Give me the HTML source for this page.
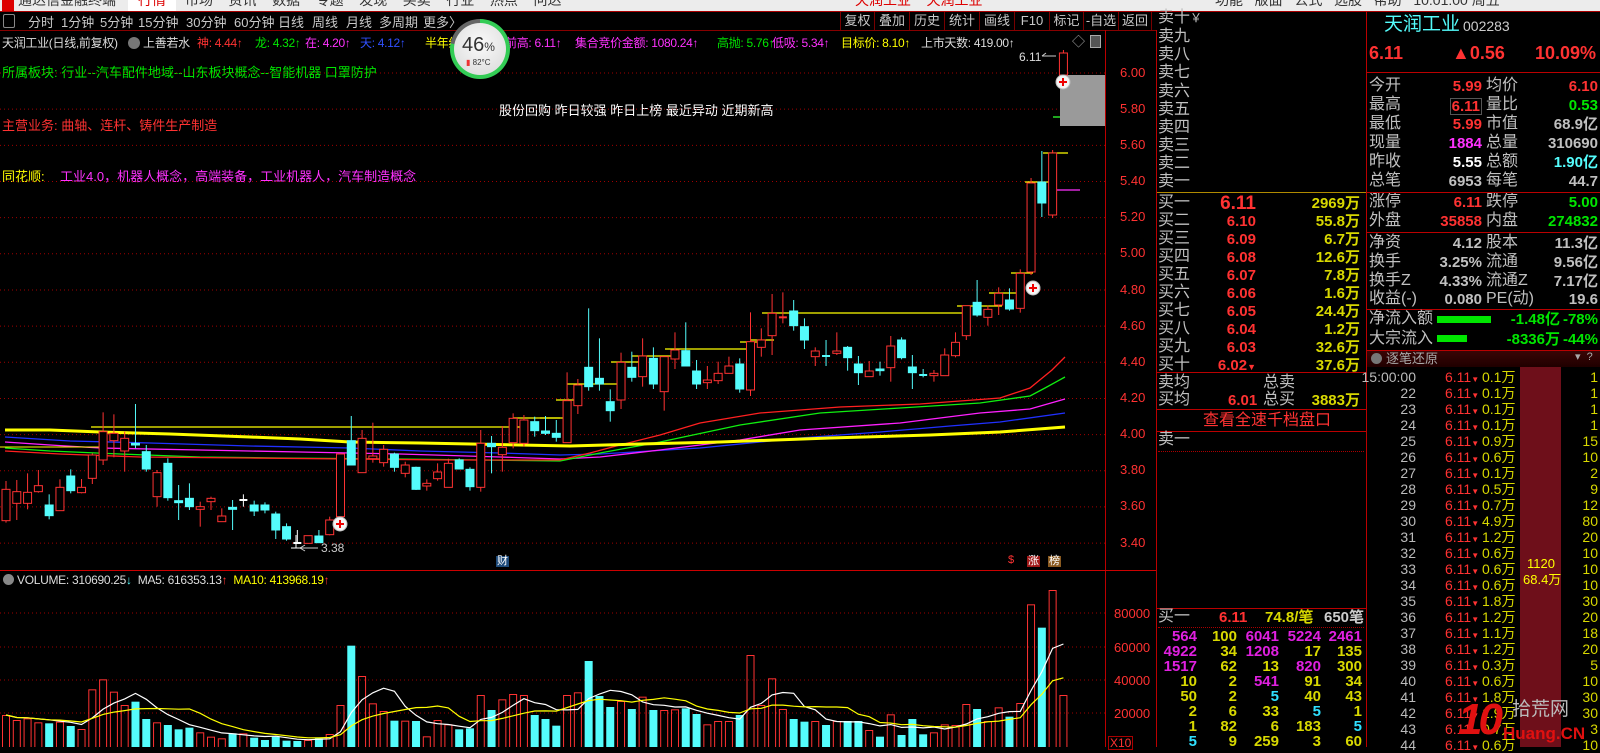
<!DOCTYPE html>
<html><head><meta charset="utf-8"><style>
*{margin:0;padding:0;box-sizing:border-box}
body{width:1600px;height:747px;background:#000;overflow:hidden;position:relative;font-family:"Liberation Sans","Noto Sans CJK SC",sans-serif;color:#c8c8c8}
.t{position:absolute;white-space:nowrap;line-height:1}
.r{color:#ff3232}.g{color:#00e600}.m{color:#ff32ff}.y{color:#ffff00}.c{color:#54fcfc}.w{color:#fff}.gy{color:#c0c0c0}.o{color:#d8d800}
.ob{font-size:16px;color:#c0c0c0}
.n{font-size:15px;font-weight:bold}
.tb{font-size:13px;color:#c8c8c8;top:16px}
.hd{font-size:12px;top:37px;letter-spacing:-0.3px}
.btn{position:absolute;top:12px;height:18px;border-left:1px solid #700;font-size:13px;color:#c8c8c8;text-align:center;line-height:18px}
.tl{font-size:14px}
</style></head><body>
<!-- title bar -->
<div style="position:absolute;left:0;top:0;width:1600px;height:11px;background:#ececec;overflow:hidden">
<div style="position:absolute;left:2px;top:0;width:12px;height:11px;background:#d00"></div>
<div class="t" style="left:18px;top:-7px;font-size:14px;color:#333">通达信金融终端</div>
<div style="position:absolute;left:128px;top:0;width:48px;height:11px;background:#fff"></div>
<div class="t" style="left:138px;top:-7px;font-size:14px;color:#d00">行情</div>
<div class="t" style="left:185px;top:-7px;font-size:14px;color:#333">市场&nbsp;&nbsp;&nbsp;&nbsp;资讯&nbsp;&nbsp;&nbsp;&nbsp;数据&nbsp;&nbsp;&nbsp;&nbsp;专题&nbsp;&nbsp;&nbsp;&nbsp;发现&nbsp;&nbsp;&nbsp;&nbsp;买卖&nbsp;&nbsp;&nbsp;&nbsp;行业&nbsp;&nbsp;&nbsp;&nbsp;热点&nbsp;&nbsp;&nbsp;&nbsp;问达</div>
<div class="t" style="left:855px;top:-7px;font-size:14px;color:#d00">天润工业&nbsp;&nbsp;&nbsp;&nbsp;天润工业</div>
<div class="t" style="left:1215px;top:-7px;font-size:14px;color:#333">功能&nbsp;&nbsp;&nbsp;版面&nbsp;&nbsp;&nbsp;公式&nbsp;&nbsp;&nbsp;选股&nbsp;&nbsp;&nbsp;帮助&nbsp;&nbsp;&nbsp;10:01:00 周五</div>
</div>
<div style="position:absolute;left:0;top:11px;width:1600px;height:1px;background:#a00"></div>
<div style="position:absolute;left:0;top:30px;width:1156px;height:1px;background:#800"></div>
<div style="position:absolute;left:3px;top:14px;width:12px;height:14px;border:1px solid #888;border-radius:2px"></div>
<div class="t tb" style="left:28px">分时</div>
<div class="t tb" style="left:61px">1分钟</div>
<div class="t tb" style="left:100px">5分钟</div>
<div class="t tb" style="left:138px">15分钟</div>
<div class="t tb" style="left:186px">30分钟</div>
<div class="t tb" style="left:234px">60分钟</div>
<div class="t tb c" style="left:278px">日线</div>
<div class="t tb" style="left:312px">周线</div>
<div class="t tb" style="left:346px">月线</div>
<div class="t tb" style="left:379px">多周期</div>
<div class="t tb" style="left:423px">更多〉</div>
<div class="btn" style="left:840px;width:34px">复权</div>
<div class="btn" style="left:874px;width:35px">叠加</div>
<div class="btn" style="left:909px;width:35px">历史</div>
<div class="btn" style="left:944px;width:35px">统计</div>
<div class="btn" style="left:979px;width:35px">画线</div>
<div class="btn" style="left:1014px;width:35px">F10</div>
<div class="btn" style="left:1049px;width:34px">标记</div>
<div class="btn" style="left:1083px;width:35px">-自选</div>
<div class="btn" style="left:1118px;width:34px;border-right:1px solid #700">返回</div>

<!-- header line -->
<div class="t hd" style="left:2px;color:#ddd">天润工业(日线,前复权)</div>
<div style="position:absolute;left:128px;top:37px;width:12px;height:12px;border-radius:6px;background:#777"></div>
<div class="t hd" style="left:143px;color:#ddd">上善若水</div>
<div class="t hd r" style="left:197px">神: 4.44↑</div>
<div class="t hd g" style="left:255px">龙: 4.32↑</div>
<div class="t hd m" style="left:305px">在: 4.20↑</div>
<div class="t hd" style="left:360px;color:#3050ff">天: 4.12↑</div>
<div class="t hd y" style="left:425px">半年线</div>
<div class="t hd m" style="left:505px">前高: 6.11↑</div>
<div class="t hd m" style="left:575px">集合竞价金额: 1080.24↑</div>
<div class="t hd g" style="left:717px">高抛: 5.76↑</div>
<div class="t hd m" style="left:772px">低吸: 5.34↑</div>
<div class="t hd y" style="left:841px">目标价: 8.10↑</div>
<div class="t hd" style="left:921px;color:#ddd">上市天数: 419.00↑</div>
<div class="t" style="left:1072px;top:35px;font-size:13px;color:#aaa">◇</div>
<div style="position:absolute;left:1090px;top:35px;width:11px;height:13px;border:1px solid #aaa;background:#555"></div>

<div class="t g" style="left:2px;top:66px;font-size:13px">所属板块: 行业--汽车配件地域--山东板块概念--智能机器 口罩防护</div>
<div class="t w" style="left:499px;top:104px;font-size:13px">股份回购 昨日较强 昨日上榜 最近异动 近期新高</div>
<div class="t r" style="left:2px;top:119px;font-size:13px">主营业务: 曲轴、连杆、铸件生产制造</div>
<div class="t y" style="left:2px;top:170px;font-size:13px">同花顺:</div>
<div class="t m" style="left:60px;top:170px;font-size:13px">工业4.0，机器人概念，高端装备，工业机器人，汽车制造概念</div>

<svg id="ch" width="1156" height="747" style="position:absolute;left:0;top:0"></svg>

<!-- circle widget -->
<div style="position:absolute;left:450px;top:19px;width:60px;height:60px;border-radius:30px;background:conic-gradient(#33cc55 0 78%,#666 78% 100%);"></div>
<div style="position:absolute;left:454px;top:23px;width:52px;height:52px;border-radius:26px;background:radial-gradient(circle at 50% 40%,#fafafa,#d8d8d8)"></div>
<div class="t" style="left:462px;top:35px;font-size:20px;color:#333">46<span style="font-size:12px">%</span></div>
<div class="t" style="left:466px;top:59px;font-size:8px;color:#333"><span style="color:#e33">▮</span> 82°C</div>

<!-- price axis labels -->
<div class="t r" style="left:1120px;top:66px;font-size:13px">6.00</div>
<div class="t r" style="left:1120px;top:102px;font-size:13px">5.80</div>
<div class="t r" style="left:1120px;top:138px;font-size:13px">5.60</div>
<div class="t r" style="left:1120px;top:174px;font-size:13px">5.40</div>
<div class="t r" style="left:1120px;top:210px;font-size:13px">5.20</div>
<div class="t r" style="left:1120px;top:246px;font-size:13px">5.00</div>
<div class="t r" style="left:1120px;top:283px;font-size:13px">4.80</div>
<div class="t r" style="left:1120px;top:319px;font-size:13px">4.60</div>
<div class="t r" style="left:1120px;top:355px;font-size:13px">4.40</div>
<div class="t r" style="left:1120px;top:391px;font-size:13px">4.20</div>
<div class="t r" style="left:1120px;top:427px;font-size:13px">4.00</div>
<div class="t r" style="left:1120px;top:463px;font-size:13px">3.80</div>
<div class="t r" style="left:1120px;top:499px;font-size:13px">3.60</div>
<div class="t r" style="left:1120px;top:536px;font-size:13px">3.40</div>
<div class="t r" style="left:1114px;top:607px;font-size:13px">80000</div>
<div class="t r" style="left:1114px;top:641px;font-size:13px">60000</div>
<div class="t r" style="left:1114px;top:674px;font-size:13px">40000</div>
<div class="t r" style="left:1114px;top:707px;font-size:13px">20000</div>
<div class="t r" style="left:1108px;top:736px;font-size:12px;border:1px solid #a00;padding:0 1px">X10</div>

<div class="t" style="left:1019px;top:51px;font-size:12px;color:#ddd">6.11</div>
<div class="t" style="left:321px;top:542px;font-size:12px;color:#ccc">3.38</div>
<div class="t" style="left:496px;top:556px;font-size:11px;color:#fff;background:#1d4a7a;padding:0 1px">财</div>
<div class="t" style="left:1008px;top:555px;font-size:11px;color:#f33">$</div>
<div class="t" style="left:1027px;top:556px;font-size:11px;color:#fff;background:#a01818;padding:0 1px">涨</div>
<div class="t" style="left:1048px;top:556px;font-size:11px;color:#fff;background:#8a5a20;padding:0 1px">榜</div>

<!-- volume header -->
<div style="position:absolute;left:3px;top:574px;width:11px;height:11px;border-radius:6px;background:#888"></div>
<div class="t" style="left:17px;top:574px;font-size:12px;color:#ddd;letter-spacing:-0.3px">VOLUME: 310690.25<span class="c">↓</span>&nbsp; MA5: 616353.13<span class="r">↑</span>&nbsp; <span class="y">MA10: 413968.19</span><span class="r">↑</span></div>

<!-- orderbook -->
<div class="t ob" style="left:1158px;top:10px">卖十<span style="font-size:12px">￥</span></div>
<div class="t ob" style="left:1158px;top:29px">卖九</div>
<div class="t ob" style="left:1158px;top:47px">卖八</div>
<div class="t ob" style="left:1158px;top:65px">卖七</div>
<div class="t ob" style="left:1158px;top:84px">卖六</div>
<div class="t ob" style="left:1158px;top:102px">卖五</div>
<div class="t ob" style="left:1158px;top:120px">卖四</div>
<div class="t ob" style="left:1158px;top:138px">卖三</div>
<div class="t ob" style="left:1158px;top:156px">卖二</div>
<div class="t ob" style="left:1158px;top:174px">卖一</div>
<div style="position:absolute;left:1156px;top:192px;width:210px;height:1px;background:#b08a00"></div>
<div id="bids"></div>
<div style="position:absolute;left:1156px;top:372px;width:210px;height:1px;background:#b00"></div>
<div class="t ob" style="left:1158px;top:375px">卖均</div>
<div class="t ob" style="left:1263px;top:375px">总卖</div>
<div class="t ob" style="left:1158px;top:392px">买均</div>
<div class="t n r" style="left:1228px;top:393px">6.01</div>
<div class="t ob" style="left:1263px;top:392px">总买</div>
<div class="t n o" style="right:240px;top:393px">3883万</div>
<div style="position:absolute;left:1156px;top:409px;width:210px;height:1px;background:#b00"></div>
<div class="t r" style="left:1203px;top:413px;font-size:16px">查看全速千档盘口</div>
<div style="position:absolute;left:1156px;top:431px;width:210px;height:1px;background:#b00"></div>
<div class="t ob" style="left:1158px;top:432px">卖一</div>
<div style="position:absolute;left:1158px;top:451px;width:206px;border-top:1px dotted #a00"></div>
<div style="position:absolute;left:1156px;top:608px;width:210px;height:1px;background:#b00"></div>
<div class="t ob" style="left:1158px;top:609px">买一</div>
<div class="t n r" style="left:1219px;top:610px">6.11</div>
<div class="t n o" style="left:1265px;top:610px">74.8/笔</div>
<div class="t n" style="left:1324px;top:610px;color:#ccc">650笔</div>
<div style="position:absolute;left:1158px;top:627px;width:206px;border-top:1px dotted #a00"></div>
<div id="grid"></div>
<div style="position:absolute;left:1156px;top:30px;width:1px;height:717px;background:#b00"></div>
<div style="position:absolute;left:1366px;top:11px;width:1px;height:736px;background:#b00"></div>

<!-- info panel -->
<div class="t c" style="left:1384px;top:15px;font-size:19px">天润工业</div>
<div class="t" style="left:1463px;top:19px;font-size:14px;color:#ccc">002283</div>
<div class="t r" style="left:1369px;top:44px;font-size:18px;font-weight:bold">6.11</div>
<div class="t r" style="left:1452px;top:44px;font-size:18px;font-weight:bold">▲0.56</div>
<div class="t r" style="right:4px;top:44px;font-size:18px;font-weight:bold">10.09%</div>
<div style="position:absolute;left:1366px;top:72px;width:234px;height:1px;background:#b00"></div>
<div id="info"></div>
<div style="position:absolute;left:1366px;top:192px;width:234px;height:1px;background:#b00"></div>
<div style="position:absolute;left:1366px;top:232px;width:234px;height:1px;background:#b00"></div>
<div style="position:absolute;left:1366px;top:309px;width:234px;height:1px;background:#b00"></div>
<div class="t ob" style="left:1369px;top:311px">净流入额</div>
<div style="position:absolute;left:1437px;top:316px;width:54px;height:7px;background:#00e600"></div>
<div class="t n g" style="right:40px;top:312px">-1.48亿</div>
<div class="t n g" style="right:2px;top:312px">-78%</div>
<div class="t ob" style="left:1369px;top:331px">大宗流入</div>
<div style="position:absolute;left:1437px;top:335px;width:30px;height:7px;background:#00e600"></div>
<div class="t n g" style="right:40px;top:332px">-8336万</div>
<div class="t n g" style="right:2px;top:332px">-44%</div>
<div style="position:absolute;left:1366px;top:350px;width:234px;height:1px;background:#b00"></div>
<div style="position:absolute;left:1367px;top:351px;width:233px;height:16px;background:linear-gradient(#3a0505,#200000)"></div>
<div style="position:absolute;left:1371px;top:353px;width:11px;height:11px;border-radius:6px;background:#777"></div>
<div class="t" style="left:1386px;top:352px;font-size:13px;color:#aaa">逐笔还原</div>
<div class="t" style="left:1575px;top:352px;font-size:11px;color:#aaa">▾&nbsp; ?</div>
<div style="position:absolute;left:1520px;top:367px;width:41px;height:380px;background:#6e0f1a"></div>
<div class="t y" style="left:1527px;top:557px;font-size:13px">1120</div>
<div class="t y" style="left:1523px;top:573px;font-size:13px">68.4万</div>
<div id="trades"></div>

<!-- watermark -->
<div class="t" style="left:1458px;top:698px;font-size:44px;font-weight:bold;font-style:italic;color:#e01010;letter-spacing:-4px">10</div>
<div class="t" style="left:1512px;top:700px;font-size:19px;color:#bbb">拾荒网</div>
<div class="t" style="left:1503px;top:725px;font-size:17px;color:#e01010;font-weight:bold">Huang.CN</div>

<script>
const NS="http://www.w3.org/2000/svg",svg=document.getElementById('ch');
function el(n,a){const e=document.createElementNS(NS,n);for(const k in a)e.setAttribute(k,a[k]);svg.appendChild(e);return e}
for(let k=0;k<14;k++){const y=73+k*36.16;el('line',{x1:0,x2:1105,y1:y,y2:y,stroke:'#a00000','stroke-dasharray':'1 3'})}
[613,647,680,713].forEach(y=>el('line',{x1:0,x2:1105,y1:y,y2:y,stroke:'#a00000','stroke-dasharray':'1 3'}));
el('line',{x1:1105.5,x2:1105.5,y1:30,y2:747,stroke:'#b00'});
el('line',{x1:0,x2:1156,y1:570.5,y2:570.5,stroke:'#c00'});
const P=(pts,c,w)=>el('polyline',{points:pts,fill:'none',stroke:c,'stroke-width':w});
P('5,437 70,441 150,443 250,446 350,448 420,451 500,453 560,455 600,454 700,448 800,438 880,432 950,426 1000,422 1065,413','#2030ff',1.3);
P('5,442 50,445 100,448 200,450 300,452 400,454 500,457 560,459 600,457 660,450 740,440 800,430 900,423 980,413 1030,409 1065,399','#ff20ff',1.3);
P('5,448 50,451 120,454 200,457 280,458 400,459 560,461 600,453 660,442 740,425 820,413 900,408 980,403 1030,396 1045,388 1065,377','#10ee10',1.3);
P('5,451 60,454 140,457 250,458 350,459 450,460 560,460 590,453 620,445 660,435 700,423 760,413 840,407 920,404 1000,398 1030,388 1052,370 1065,357','#ff2020',1.3);
P('5,430 50,430 100,432 170,434 250,437 300,439 350,442 420,443 520,445 570,446 640,444 720,442 830,438 930,435 1000,432 1065,427','#ffff00',3);
P('0,447 100,447','#ffff00',1);
[[91,524,427],[513,560,418],[540,569,418],[556,579,400],[567,623,384],[611,644,362],[632,677,356],[665,753,349],[740,763,342],[751,774,340],[762,969,313],[957,1002,306],[989,1023,293],[1011,1033,273],[1025,1052,182],[1043,1068,153]].forEach(a=>el('line',{x1:a[0],x2:a[1],y1:a[2],y2:a[2],stroke:'#ffff00','stroke-width':1.3}));
el('line',{x1:1053,x2:1068,y1:117,y2:117,stroke:'#30ff30','stroke-width':1.3});
el('line',{x1:1056,x2:1080,y1:190,y2:190,stroke:'#ff30ff','stroke-width':1.3});
el('rect',{x:1060,y:75,width:45,height:51,fill:'#9a9a9a'});
const A=[
'r 328 422 303 428','r 335 370 300 420','r 337 370 280 388','r 317 335 270 338','c 375 407 343 418','r 322 392 298 392','c 288 332 268 340','r 322 338 297 340','r 225 295 220 312','r 155 240 97 255',
'r 160 182 103 232','r 175 213 155 275','c 190 195 72 205','c 215 267 195 275','r 278 350 270 380','c 250 353 235 362','c 362 368 315 420','c 355 380 310 390','r 380 388 365 440','r 355 365 350 390',
'r 408 425 385 425','c 382 388 360 450','w 360 361 343 380','c 375 393 362 408','c 375 390 367 400','c 402 450 395 477','c 440 477 430 482','w 489 490 450 490','r 467 490 467 490','c 468 488 450 488',
'r 420 464 410 466','r 222 410 222 410','c 182 255 108 255','r 175 278 150 278','r 228 236 128 248','r 208 248 195 260','c 222 262 218 275','r 255 280 245 292','c 262 328 260 330','r 310 318 298 332',
'r 276 296 250 302','r 250 322 236 322','c 240 267 235 268','c 268 320 262 332','r 190 322 150 335','c 190 200 168 280','r 202 224 138 275','r 115 188 100 205','r 120 190 105 200','c 125 152 110 170',
'c 153 160 108 165','c 160 172 120 185'];
const B=['r 422 548 337 548','r 375 437 357 462','c 322 380 145 392','c 355 372 235 392','c 425 452 388 485','r 307 420 278 447','c 322 352 275 365','r 288 350 235 380','c 295 372 262 387','r 290 395 290 452',
'r 270 297 217 327','c 272 318 187 318','c 333 372 300 387','r 360 368 318 387','r 340 362 305 372','r 318 340 290 340','c 312 387 295 398','r 245 390 157 408','r 240 262 205 290','r 160 227 102 285',
'r 172 176 97 190','c 153 197 120 212','c 200 240 175 267','r 273 290 262 318','c 288 292 240 318','r 273 280 217 285','c 262 293 258 332','c 312 338 288 375','r 333 350 303 350','c 327 332 305 347',
'r 258 323 228 365','c 240 293 232 298','c 321 338 285 387','c 345 347 327 352','r 340 347 330 365','r 285 347 265 347','r 247 287 217 292','r 137 227 137 240','c 127 165 60 170','r 148 172 137 197',
'r 100 135 82 165','c 120 147 85 152','r 40 145 28 158'];
const C=['r 183 272 178 275','c 182 203 151 217','r 153 215 150 218','r 53 75 50 80'];
const all=[];A.forEach(s=>all.push([s,z=>380+z/3]));B.forEach(s=>all.push([s,z=>260+z/3]));C.forEach(s=>all.push([s,z=>z]));
const cx=i=>6+i*10.79;
all.forEach((d,i)=>{const p=d[0].split(' '),f=d[1];const col=p[0]=='r'?'#ff3232':p[0]=='c'?'#54fcfc':'#ffffff';
 let t=f(+p[1]),b=f(+p[2]),h=f(+p[3]),l=f(+p[4]);const x=cx(i);
 el('line',{x1:x,x2:x,y1:Math.min(h,t),y2:Math.max(l,b),stroke:col,'stroke-width':1});
 if(b-t<1.5){el('line',{x1:x-4,x2:x+4,y1:t,y2:t,stroke:col,'stroke-width':2})}
 else el('rect',{x:x-4,y:t,width:8,height:b-t,fill:p[0]=='r'?'#000':col,stroke:col,'stroke-width':1});
});
[[340,524],[1033,288],[1063,82]].forEach(m=>{el('circle',{cx:m[0],cy:m[1],r:7,fill:'#f4f4f4',stroke:'#bbb'});el('path',{d:`M${m[0]-4} ${m[1]}h8M${m[0]} ${m[1]-4}v8`,stroke:'#e00','stroke-width':2})});
el('path',{d:'M300 548h18M300 548l5-3M300 548l5 3',stroke:'#ccc',fill:'none'});
el('path',{d:'M296 535v13M291 548h10',stroke:'#fff',fill:'none'});
el('path',{d:'M1042 56h14M1042 56l4-3',stroke:'#ccc',fill:'none'});
const V=[480,495,490,502,'c505',500,'c513',522,403,373,410,450,'c440','c492',502,'c510','c523','c518',532,545,550,'c535',535,'c548','c555','c545','c557','c558',555,'c550',537,450,'c272',363,445,468,'c497',497,'c498',544,495,508,'c523','c520',420,'c465',433,417,420,'c480','c492','c512',420,412,'c318','c423','c456',438,'c462',425,'c465',465,463,'c460','c477',508,498,498,'c480',300,450,370,462,'c492','c500',498,'c510',498,'c498','c498',525,'c545',478,'c540','c492','c538',532,508,510,447,'c462',498,457,'c485',444,148,'c218',105,420];
const hs=[];
V.forEach((v,i)=>{let c=false;if(typeof v=='string'){c=true;v=+v.slice(1)}const y=555+v/3;hs.push(y);const x=cx(i);
 if(c)el('rect',{x:x-4,y:y,width:8,height:747-y,fill:'#54fcfc'});else el('rect',{x:x-3.5,y:y+.5,width:7,height:747-y,fill:'none',stroke:'#ff3232','stroke-width':1});});
function ma(n,c){let pts=[];for(let i=0;i<hs.length;i++){let s=0,k=0;for(let j=Math.max(0,i-n+1);j<=i;j++){s+=747-hs[j];k++}pts.push(cx(i)+','+(747-s/k).toFixed(1))}P(pts.join(' '),c,1.2)}
ma(5,'#ffffff');ma(10,'#ffff00');

const bn=['买一','买二','买三','买四','买五','买六','买七','买八','买九','买十'],bp=['6.11','6.10','6.09','6.08','6.07','6.06','6.05','6.04','6.03','6.02'],bv=['2969万','55.8万','6.7万','12.6万','7.8万','1.6万','24.4万','1.2万','32.6万','37.6万'];
let h='';bn.forEach((n,i)=>{const y=195+i*18;h+=`<div class="t ob" style="left:1158px;top:${y}px">${n}</div><div class="t n r" style="right:344px;top:${y+1}px;${i==0?'font-size:19px;top:'+(y-1)+'px':''}">${bp[i]}${i==9?'<span style="font-size:9px">▼</span>':''}</div><div class="t n o" style="right:240px;top:${y+1}px">${bv[i]}</div>`});
document.getElementById('bids').innerHTML=h;
const G=[['m564','y100','m6041','m5224','m2461'],['m4922','y34','m1208','y17','y135'],['m1517','y62','y13','m820','y300'],['y10','y2','m541','y91','y34'],['y50','y2','c5','y40','y43'],['y2','y6','y33','c5','y1'],['y1','y82','y6','y183','c5'],['c5','y9','y259','y3','y60']];
const gr=[1600-1197,1600-1237,1600-1279,1600-1321,1600-1362],cm={m:'#e020e0',y:'#d8d800',c:'#30e0ff'};
h='';G.forEach((r,i)=>r.forEach((v,j)=>{h+=`<div class="t n" style="right:${gr[j]}px;top:${629+i*15}px;color:${cm[v[0]]}">${v.slice(1)}</div>`}));
document.getElementById('grid').innerHTML=h;
const I=[['今开','5.99','r','均价','6.10','r',78],['最高','6.11','r','量比','0.53','g',97],['最低','5.99','r','市值','68.9亿','gy',116],['现量','1884','m','总量','310690','gy',135],['昨收','5.55','w','总额','1.90亿','c',154],['总笔','6953','gy','每笔','44.7','gy',173],
['涨停','6.11','r','跌停','5.00','g',194],['外盘','35858','r','内盘','274832','g',213],['净资','4.12','gy','股本','11.3亿','gy',235],['换手','3.25%','gy','流通','9.56亿','gy',254],['换手Z','4.33%','gy','流通Z','7.17亿','gy',273],['收益(-)','0.080','gy','PE(动)','19.6','gy',291]];
h='';I.forEach(r=>{const y=r[6];const c1=r[0]=='最高'?'border:1px solid #555;padding:0 1px;':'';h+=`<div class="t ob" style="left:1369px;top:${y}px">${r[0]}</div><div class="t n ${r[2]}" style="right:118px;top:${y+1}px;${c1}">${r[1]}</div><div class="t ob" style="left:1486px;top:${y}px">${r[3]}</div><div class="t n ${r[5]}" style="right:2px;top:${y+1}px">${r[4]}</div>`});
document.getElementById('info').innerHTML=h;
const TV=['0.1','0.1','0.1','0.1','0.9','0.6','0.1','0.5','0.7','4.9','1.2','0.6','0.6','0.6','1.8','1.2','1.1','1.2','0.3','0.6','1.8','1.9','0.7','0.6'],TC=[1,1,1,1,15,10,2,9,12,80,20,10,10,10,30,20,18,20,5,10,30,30,3,10];
h='';TV.forEach((v,i)=>{const y=370+i*16;const tm=i==0?'15:00:00':String(21+i);h+=`<div class="t tl" style="right:184px;top:${y}px;color:#bbb">${tm}</div><div class="t tl r" style="left:1445px;top:${y}px">6.11<span style="font-size:8px">▼</span></div><div class="t tl o" style="left:1482px;top:${y}px">${v}万</div><div class="t tl o" style="right:2px;top:${y}px">${TC[i]}</div>`});
document.getElementById('trades').innerHTML=h;
</script>
</body></html>
